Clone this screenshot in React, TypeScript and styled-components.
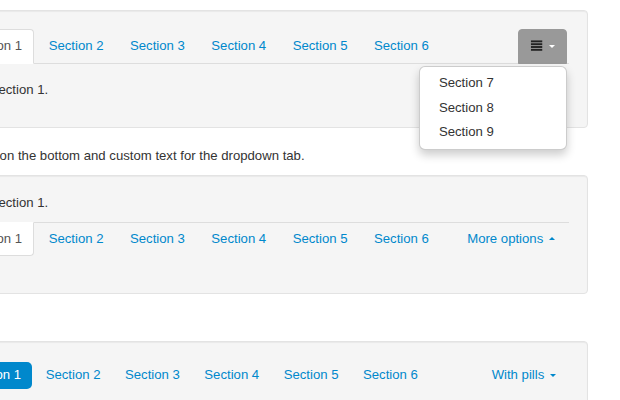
import styled, { createGlobalStyle, css } from "styled-components"

const GlobalStyle = createGlobalStyle`
    body {
        margin: 0;
        background: #fff;
        color: #333;
        font-family: "Liberation Sans", Helvetica, Arial, sans-serif;
        font-size: 13.16px;
        line-height: 18.8px;
        overflow: hidden;
    }
    ul {
        list-style: none;
        margin: 0;
        padding: 0;
    }
`

const Page = styled.div`
    width: 652px;
    margin-left: -64px;
    padding-top: 10px;
`

const Well = styled.div`
    background: #f5f5f5;
    border: 1px solid #e3e3e3;
    border-radius: 4px;
    box-shadow: inset 0 1px 1px rgba(0, 0, 0, 0.05);
    padding: 18px;
    margin-bottom: 18.8px;
`

const Caption = styled.p`
    margin: 0 0 9.4px;
    min-height: 18.8px;
`

const Pane = styled.p<{ $gap?: number }>`
    margin: 0 0 ${p => p.$gap ?? 9.4}px;
`

const TabList = styled.ul<{ $below?: boolean }>`
    display: flex;
    align-items: flex-start;
    ${p => p.$below
        ? css`border-top: 1px solid #ddd; margin-bottom: 18.8px;`
        : css`border-bottom: 1px solid #ddd; margin-bottom: 17.5px;`}
`

const TabItem = styled.li<{ $below?: boolean; $right?: boolean }>`
    position: relative;
    margin-right: 1.9px;
    ${p => p.$below ? css`margin-top: -1px;` : css`margin-bottom: -1px;`}
    ${p => p.$right && css`margin-left: auto;`}
`

const TabLink = styled.a<{ $active?: boolean; $open?: boolean; $below?: boolean }>`
    display: block;
    padding: 7px 11.3px;
    line-height: 18.8px;
    border: 1px solid transparent;
    border-radius: ${p => p.$below ? "0 0 4px 4px" : "4px 4px 0 0"};
    color: #0088cc;
    text-decoration: none;
    white-space: nowrap;
    cursor: pointer;
    ${p => p.$active && css`
        background: #fff;
        color: #555;
        border-color: ${p.$below ? "transparent #ddd #ddd #ddd" : "#ddd #ddd transparent #ddd"};
    `}
    ${p => p.$open && css`
        background: #999;
        border-color: #999;
        color: #fff;
    `}
`

const PillList = styled.ul`
    display: flex;
    align-items: flex-start;
`

const PillItem = styled.li<{ $right?: boolean }>`
    position: relative;
    margin-right: 1.9px;
    ${p => p.$right && css`margin-left: auto;`}
`

const PillLink = styled.a<{ $active?: boolean }>`
    display: block;
    margin: 1.9px 0;
    padding: 4px 11.3px;
    line-height: 18.8px;
    border-radius: 5px;
    color: ${p => p.$active ? "#fff" : "#0088cc"};
    background: ${p => p.$active ? "#0088cc" : "transparent"};
    text-decoration: none;
    white-space: nowrap;
    cursor: pointer;
`

const Caret = styled.span<{ $up?: boolean; $color: string }>`
    display: inline-block;
    width: 0;
    height: 0;
    margin-left: 1.9px;
    vertical-align: top;
    border-left: 3.8px solid transparent;
    border-right: 3.8px solid transparent;
    ${p => p.$up
        ? css`border-bottom: 3.8px solid ${p.$color}; margin-top: 7px;`
        : css`border-top: 3.8px solid ${p.$color}; margin-top: 7.5px;`}
`

const JustifyIcon = styled.svg`
    display: inline-block;
    width: 13.2px;
    height: 13.2px;
    vertical-align: top;
    margin-top: 2px;
`

const Menu = styled.ul`
    position: absolute;
    top: 100%;
    right: 0;
    z-index: 10;
    min-width: 146px;
    margin-top: 1.9px;
    padding: 4.7px 0;
    background: #fff;
    border: 1px solid rgba(0, 0, 0, 0.2);
    border-radius: 6px;
    box-shadow: 0 5px 10px rgba(0, 0, 0, 0.2);
`

const MenuLink = styled.a`
    display: block;
    padding: 2.8px 18.8px;
    line-height: 18.8px;
    color: #333;
    white-space: nowrap;
    text-decoration: none;
`

const sections = ["Section 1", "Section 2", "Section 3", "Section 4", "Section 5", "Section 6"]

const App = () => {
    return (
        <>
            <GlobalStyle />
            <Page>
                <Well>
                    <TabList>
                        {sections.map((name, index) => (
                            <TabItem key={name}>
                                <TabLink $active={index === 0}>{name}</TabLink>
                            </TabItem>
                        ))}
                        <TabItem $right>
                            <TabLink $open>
                                <JustifyIcon viewBox="0 0 14 14">
                                    <rect x="1" y="1.5" width="12" height="2" fill="#222" />
                                    <rect x="1" y="4.5" width="12" height="2" fill="#222" />
                                    <rect x="1" y="7.5" width="12" height="2" fill="#222" />
                                    <rect x="1" y="10.5" width="12" height="2" fill="#222" />
                                </JustifyIcon>{" "}
                                <Caret $color="#fff" />
                            </TabLink>
                            <Menu>
                                {["Section 7", "Section 8", "Section 9"].map(name => (
                                    <li key={name}><MenuLink>{name}</MenuLink></li>
                                ))}
                            </Menu>
                        </TabItem>
                    </TabList>
                    <Pane>I'm in Section 1.</Pane>
                </Well>

                <Caption>Dropdown on the bottom and custom text for the dropdown tab.</Caption>

                <Well>
                    <Pane $gap={8.4}>I'm in Section 1.</Pane>
                    <TabList $below>
                        {sections.map((name, index) => (
                            <TabItem key={name} $below>
                                <TabLink $below $active={index === 0}>{name}</TabLink>
                            </TabItem>
                        ))}
                        <TabItem $below $right>
                            <TabLink $below>More options <Caret $up $color="#0088cc" /></TabLink>
                        </TabItem>
                    </TabList>
                </Well>

                <Caption>Pills:</Caption>

                <Well>
                    <PillList>
                        {sections.map((name, index) => (
                            <PillItem key={name}>
                                <PillLink $active={index === 0}>{name}</PillLink>
                            </PillItem>
                        ))}
                        <PillItem $right>
                            <PillLink>With pills <Caret $color="#0088cc" /></PillLink>
                        </PillItem>
                    </PillList>
                </Well>
            </Page>
        </>
    )
}

export default App
